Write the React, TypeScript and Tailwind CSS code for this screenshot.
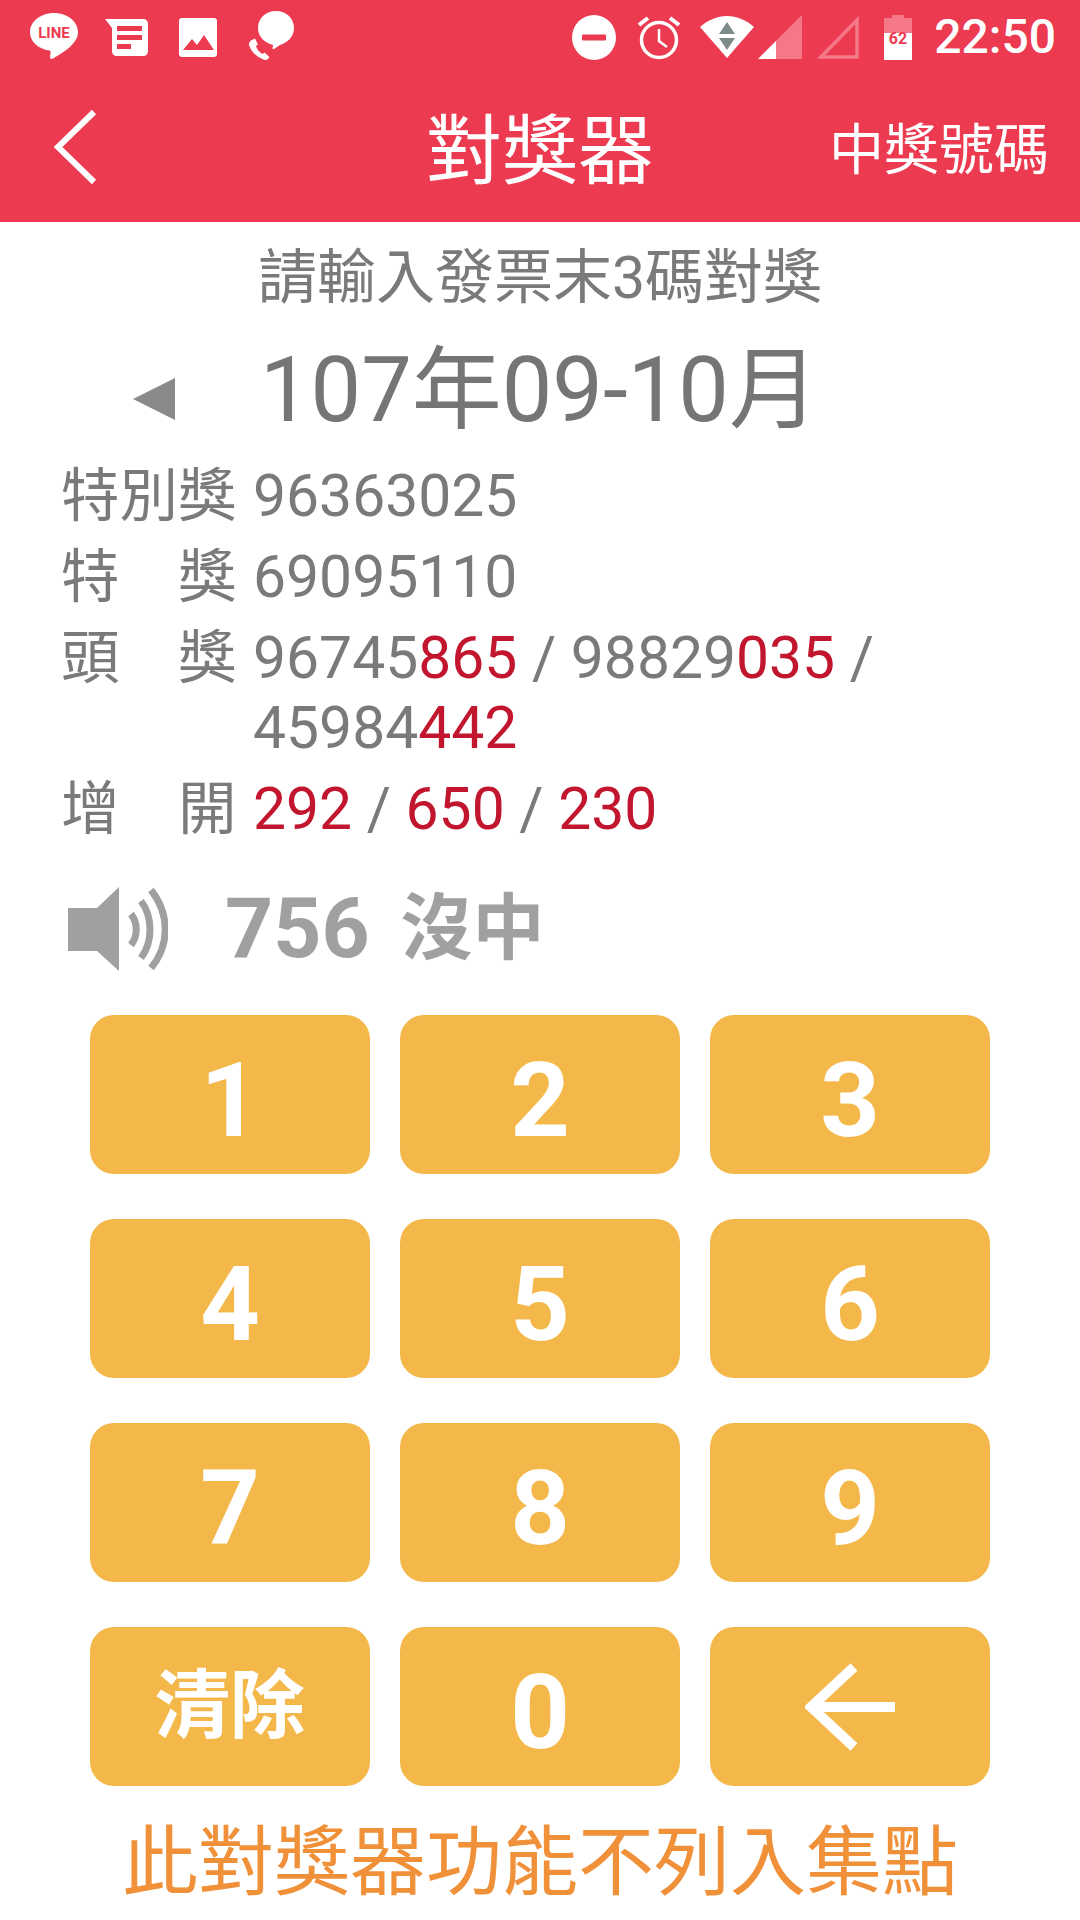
import React from "react";

const font = { fontFamily: '"Roboto", "Noto Sans CJK TC", sans-serif' };

function Line() {
  return (
    <svg width="48" height="48" viewBox="0 0 48 48" className="shrink-0">
      <path d="M24 0C11 0 0 8.3 0 19c0 9.500 8 17 19.500 18.500 1 .3 1.400 1 1 2.500l-.5 4c-.2 1.500 1 2.500 3 1.500C29 42 41 35 45 28c2-3 3-5.500 3-9C48 8.300 37 0 24 0z" fill="#fff" />
      <text x="24" y="25" textAnchor="middle" fontSize="15" fontWeight="700" fill="#ec3a50" fontFamily="Roboto, sans-serif">LINE</text>
    </svg>
  );
}
function Msg() {
  return (
    <svg width="43" height="37" viewBox="0 0 43 37" className="shrink-0">
      <path d="M0 0h38c3 0 5 2 5 5v27c0 3-2 5-5 5H12c-3 0-5-2-5-5V9z" fill="#fff" />
      <path d="M12 7h25v5H12zM12 16h25v5H12zM12 25h14v5H12z" fill="#ec3a50" />
    </svg>
  );
}
function Pic() {
  return (
    <svg width="38" height="39" viewBox="0 0 38 39" className="shrink-0">
      <rect width="38" height="39" rx="3" fill="#fff" />
      <path d="M4 32l9-11 5 6 7-10 10 15z" fill="#ec3a50" />
    </svg>
  );
}
function Call() {
  return (
    <svg width="45" height="52" viewBox="0 0 45 52" className="shrink-0">
      <path d="M27 0c10 0 18 7 18 17 0 9-7 15-14 17l-6 4c-1 .5-1.500 0-1.500-1l.5-3C16 32 9 26 9 17 9 7 17 0 27 0z" fill="#fff" />
      <path d="M3 29l3-1.500 3 6-2 1.500c1 3.500 3.500 6.500 6.500 8l2-1.500 5 4.500-2 2.500c-2 1-4 .5-7-1.500C6 45 0 37 0 33c0-1.500 1-3 3-4z" fill="#fff" />
    </svg>
  );
}
function Dnd() {
  return (
    <svg width="44" height="45" viewBox="0 0 44 45" className="shrink-0">
      <ellipse cx="22" cy="22.500" rx="22" ry="22.500" fill="#fff" />
      <rect x="10" y="19.500" width="24" height="6" rx="1" fill="#ec3a50" />
    </svg>
  );
}
function Alarm() {
  return (
    <svg width="42" height="45" viewBox="0 0 42 45" className="shrink-0" fill="none" stroke="#fff">
      <circle cx="21" cy="25" r="17.500" strokeWidth="3.500" />
      <path d="M21 14v12l8 6" strokeWidth="2.500" />
      <path d="M1 10l9-7M41 10l-9-7" strokeWidth="4" />
    </svg>
  );
}
function Wifi() {
  return (
    <svg width="54" height="42" viewBox="0 0 54 42" className="shrink-0">
      <path d="M0 11C8 4 17 0 27 0s19 4 27 11L27 42z" fill="#fff" />
      <path d="M27 6l8 12H19zM19 22h16l-8 12z" fill="#7c8a8a" />
    </svg>
  );
}
function Sig1() {
  return (
    <svg width="44" height="44" viewBox="0 0 44 44" className="shrink-0">
      <path d="M44 0v44H0z" fill="#f57888" />
      <path d="M18 26v18H0z" fill="#fff" />
    </svg>
  );
}
function Sig2() {
  return (
    <svg width="42" height="44" viewBox="0 0 42 44" className="shrink-0" fill="none">
      <path d="M40 5v37H4z" stroke="#f57888" strokeWidth="3.500" />
    </svg>
  );
}
function Batt() {
  return (
    <svg width="28" height="45" viewBox="0 0 28 45" className="shrink-0">
      <path d="M8 0h12v3h8v10H0V3h8z" fill="#f57888" />
      <rect y="13" width="28" height="32" fill="#fff" />
      <rect y="13" width="28" height="5" fill="#f57888" />
      <text x="14" y="29" textAnchor="middle" fontSize="16" fontWeight="700" fill="#ec3a50" fontFamily="Roboto, sans-serif">62</text>
    </svg>
  );
}
function Speaker() {
  return (
    <svg width="100" height="84" viewBox="0 0 100 84" className="shrink-0">
      <path d="M0 21h29L51 0v84L29 64H0z" fill="#a0a0a0" />
      <g fill="none" stroke="#a0a0a0" strokeWidth="7">
        <path d="M63 27c7 9 7 22 0 31" />
        <path d="M73 14c12 16 12 41 0 57" />
        <path d="M83 3c19 24 19 55 0 78" />
      </g>
    </svg>
  );
}

const R = ({ children }: { children: React.ReactNode }) => <span className="text-[#c2152e]">{children}</span>;

function Row({ label, children }: { label: string; children: React.ReactNode }) {
  return (
    <div className="flex gap-[16px] text-[58.8px] leading-[70px] mb-[11px]">
      <div className="w-[176px] shrink-0 whitespace-nowrap text-[58.500px]">{label}</div>
      <div className="flex-1 pr-[80px]">{children}</div>
    </div>
  );
}

function Key({ children }: { children: React.ReactNode }) {
  return (
    <button className="h-[159px] pt-[12px] rounded-[24px] bg-[#f4b84a] text-white font-bold text-[104px] leading-none flex items-center justify-center">
      {children}
    </button>
  );
}

export default function App() {
  return (
    <div className="w-[1080px] h-[1920px] bg-white overflow-hidden flex flex-col" style={font}>
      <div className="bg-[#ec3a50] h-[222px] shrink-0 text-white">
        <div className="h-[74px] flex items-center justify-between pl-[30px] pr-[24px]">
          <div className="flex items-center">
            <Line />
            <div className="w-[27px]" />
            <Msg />
            <div className="w-[31px]" />
            <Pic />
            <div className="w-[32px]" />
            <Call />
          </div>
          <div className="flex items-center">
            <Dnd />
            <div className="w-[22px]" />
            <Alarm />
            <div className="w-[20px]" />
            <Wifi />
            <div className="w-[4px]" />
            <Sig1 />
            <div className="w-[15px]" />
            <Sig2 />
            <div className="w-[25px]" />
            <Batt />
            <div className="w-[22px]" />
            <span className="text-[48px] font-medium leading-none">22:50</span>
          </div>
        </div>
        <div className="relative h-[148px] flex items-center justify-center pt-[8px]">
          <svg width="44" height="76" viewBox="0 0 44 76" className="absolute left-[53px] top-[35px]" fill="none" stroke="#fff" strokeWidth="6">
            <path d="M41 3L5 38l36 35" />
          </svg>
          <span className="text-[76px] leading-none">對獎器</span>
          <span className="absolute right-[31px] top-[49px] text-[55px] leading-none">中獎號碼</span>
        </div>
      </div>

      <div className="text-center text-[59px] leading-[70px] text-[#7a7a7a] mt-[21px]">請輸入發票末3碼對獎</div>

      <div className="flex items-center mt-[33px] h-[90px] text-[#757575]">
        <div className="ml-[133px] w-0 h-0 border-y-[21px] border-y-transparent border-r-[42px] border-r-[#8a8a8a] mt-[16px]" />
        <span className="ml-[85px] text-[90px] leading-none">107年09-10月</span>
      </div>

      <div className="pl-[61px] text-[#7a7a7a] mt-[25px]">
        <Row label="特別獎">96363025</Row>
        <Row label="特　獎">69095110</Row>
        <Row label="頭　獎">
          96745<R>865</R> / 98829<R>035</R> / 45984<R>442</R>
        </Row>
        <Row label="增　開">
          <R>292</R> / <R>650</R> / <R>230</R>
        </Row>
      </div>

      <div className="flex items-center pl-[68px] mt-[29px] h-[90px] text-[#a0a0a0]">
        <Speaker />
        <span className="ml-[57px] text-[84px] font-bold leading-none">756</span>
        <span className="ml-[31px] text-[72px] font-bold leading-none">沒中</span>
      </div>

      <div className="grid grid-cols-3 gap-x-[30px] gap-y-[45px] mx-[90px] mt-[41px]">
        <Key>1</Key>
        <Key>2</Key>
        <Key>3</Key>
        <Key>4</Key>
        <Key>5</Key>
        <Key>6</Key>
        <Key>7</Key>
        <Key>8</Key>
        <Key>9</Key>
        <Key><span className="text-[75px] -mt-[12px]">清除</span></Key>
        <Key>0</Key>
        <Key>
          <svg width="90" height="90" viewBox="0 0 90 90" fill="none" stroke="#fff" className="-mt-[12px]">
            <path d="M90 45H6M49 5L6 45l43 40" strokeWidth="10" />
          </svg>
        </Key>
      </div>

      <div className="text-center text-[76px] leading-none text-[#f09038] mt-[39px] whitespace-nowrap">此對獎器功能不列入集點</div>
    </div>
  );
}
